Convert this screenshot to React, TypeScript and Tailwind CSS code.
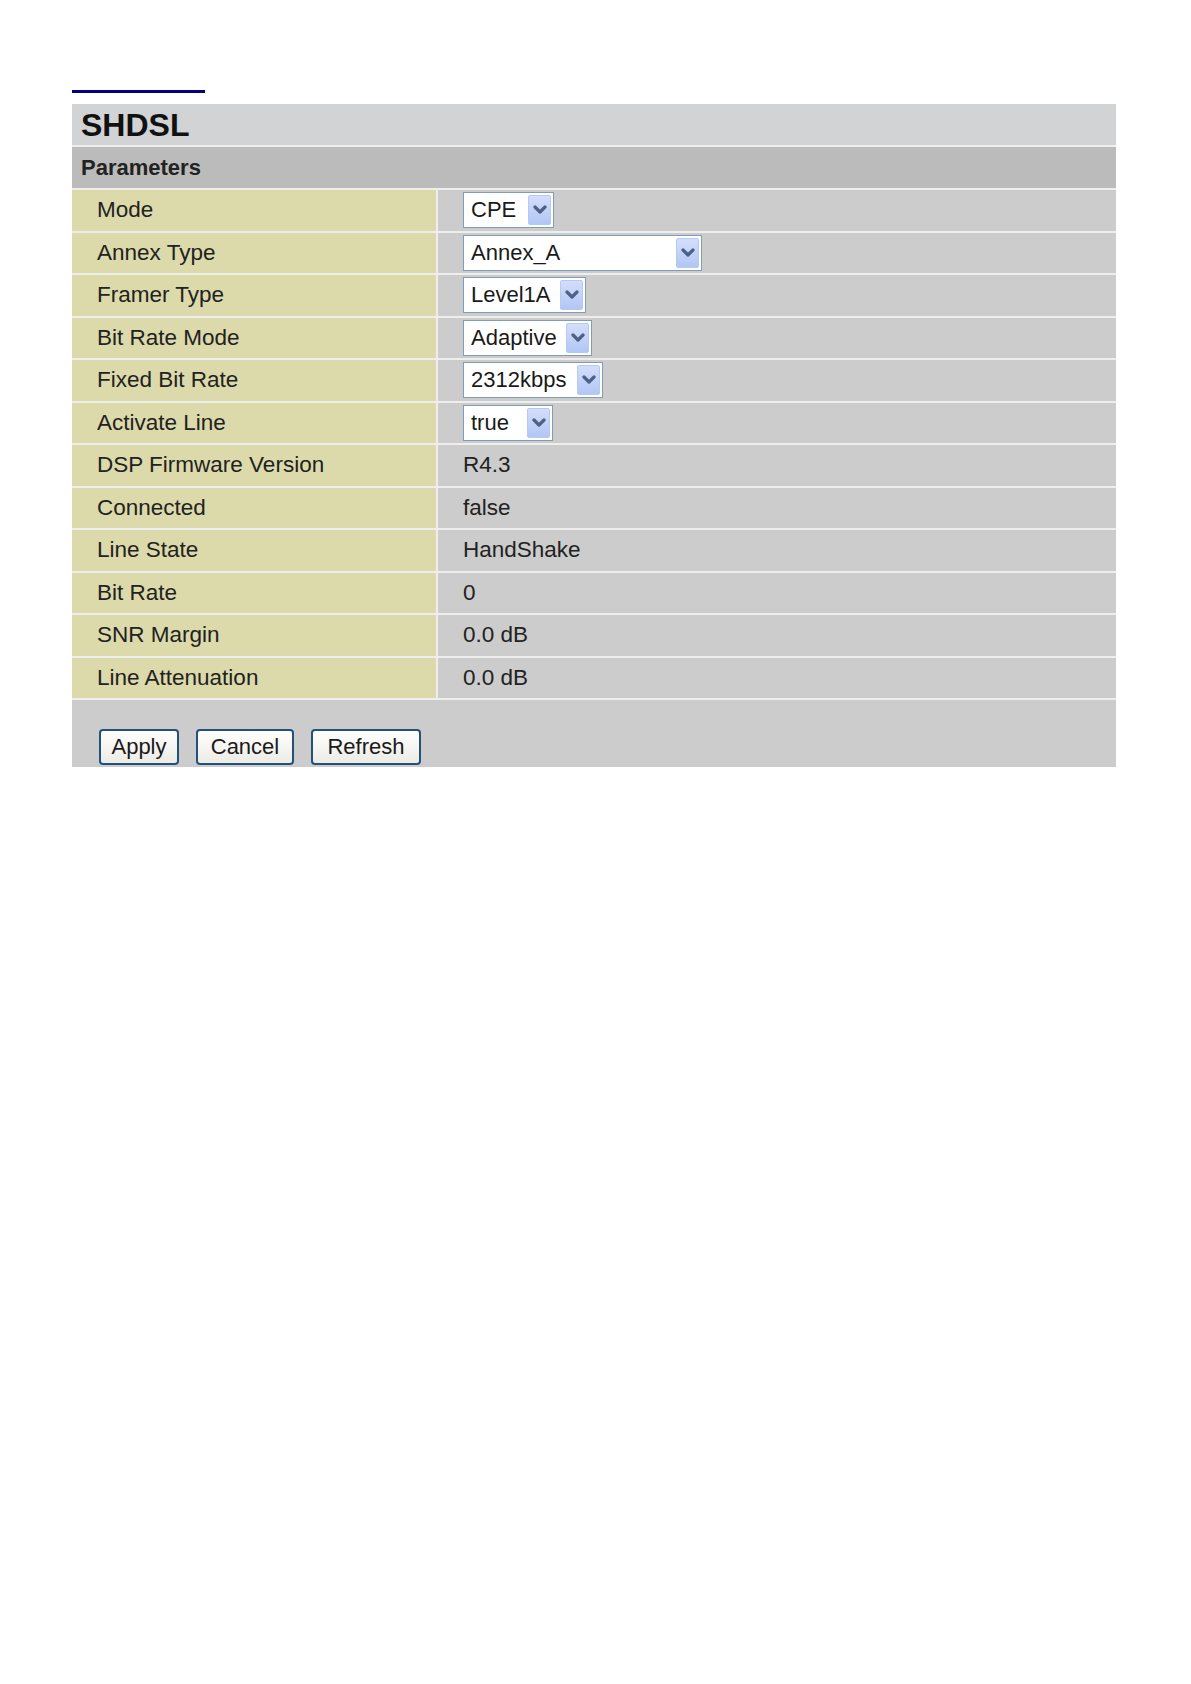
import React from "react";

type Row = { label: string; select?: { value: string; width: string }; value?: string };

const rows: Row[] = [
    { label: "Mode", select: { value: "CPE", width: "w-[91px]" } },
    { label: "Annex Type", select: { value: "Annex_A", width: "w-[239px]" } },
    { label: "Framer Type", select: { value: "Level1A", width: "w-[123px]" } },
    { label: "Bit Rate Mode", select: { value: "Adaptive", width: "w-[129px]" } },
    { label: "Fixed Bit Rate", select: { value: "2312kbps", width: "w-[140px]" } },
    { label: "Activate Line", select: { value: "true", width: "w-[90px]" } },
    { label: "DSP Firmware Version", value: "R4.3" },
    { label: "Connected", value: "false" },
    { label: "Line State", value: "HandShake" },
    { label: "Bit Rate", value: "0" },
    { label: "SNR Margin", value: "0.0 dB" },
    { label: "Line Attenuation", value: "0.0 dB" },
];

function FakeSelect({ value, width }: { value: string; width: string }) {
    return (
        <div className={`${width} h-[36px] flex items-center justify-between bg-white border border-[#7f9db9] pl-[7px] pr-[2px]`}>
            <span className="text-[22px] leading-none text-[#1a1a1a]">{value}</span>
            <div className="w-[23px] h-[30px] flex items-center justify-center bg-gradient-to-b from-[#d3defc] to-[#b2c6f5] border border-[#b8c9f0] rounded-[2px]">
                <svg width="14" height="10" viewBox="0 0 14 10">
                    <path d="M2 2 L7 7 L12 2" fill="none" stroke="#4d6185" strokeWidth="3.2" strokeLinecap="round" strokeLinejoin="round" />
                </svg>
            </div>
        </div>
    );
}

function Button({ children, width }: { children: React.ReactNode; width: string }) {
    return (
        <button className={`${width} h-[36px] rounded-[4px] border-2 border-[#24507c] bg-gradient-to-b from-[#ffffff] to-[#ecebe4] text-[22px] leading-none text-[#1a1a1a]`}>
            {children}
        </button>
    );
}

export default function App() {
    return (
        <div className="min-h-[1684px] w-full bg-white font-['Liberation_Sans',Arial,sans-serif]">
            <div className="pt-[90px] pl-[72px] w-[1116px]">
                <div className="w-[133px] h-[3px] bg-[#000080]" />

                <div className="mt-[11px] flex flex-col gap-[2px] bg-[#eeeeee]">
                    <div className="h-[41px] bg-[#d2d3d5] flex items-center pl-[9px]">
                        <span className="text-[32px] font-bold leading-none text-[#111]">SHDSL</span>
                    </div>
                    <div className="h-[41px] bg-[#bbbbbb] flex items-center pl-[9px]">
                        <span className="text-[22px] font-bold leading-none text-[#222]">Parameters</span>
                    </div>

                    {rows.map((r) => (
                        <div key={r.label} className="h-[40.5px] flex gap-[2px]">
                            <div className="w-[364px] bg-[#dcdaaa] flex items-center pl-[25px]">
                                <span className="text-[22.5px] leading-none text-[#222]">{r.label}</span>
                            </div>
                            <div className="flex-1 bg-[#cccccc] flex items-center pl-[25px]">
                                {r.select ? (
                                    <FakeSelect value={r.select.value} width={r.select.width} />
                                ) : (
                                    <span className="text-[22.5px] leading-none text-[#222]">{r.value}</span>
                                )}
                            </div>
                        </div>
                    ))}

                    <div className="h-[67px] bg-[#cccccc] flex items-end gap-[17px] pl-[27px] pb-[2px]">
                        <Button width="w-[80px]">Apply</Button>
                        <Button width="w-[98px]">Cancel</Button>
                        <Button width="w-[110px]">Refresh</Button>
                    </div>
                </div>
            </div>
        </div>
    );
}
